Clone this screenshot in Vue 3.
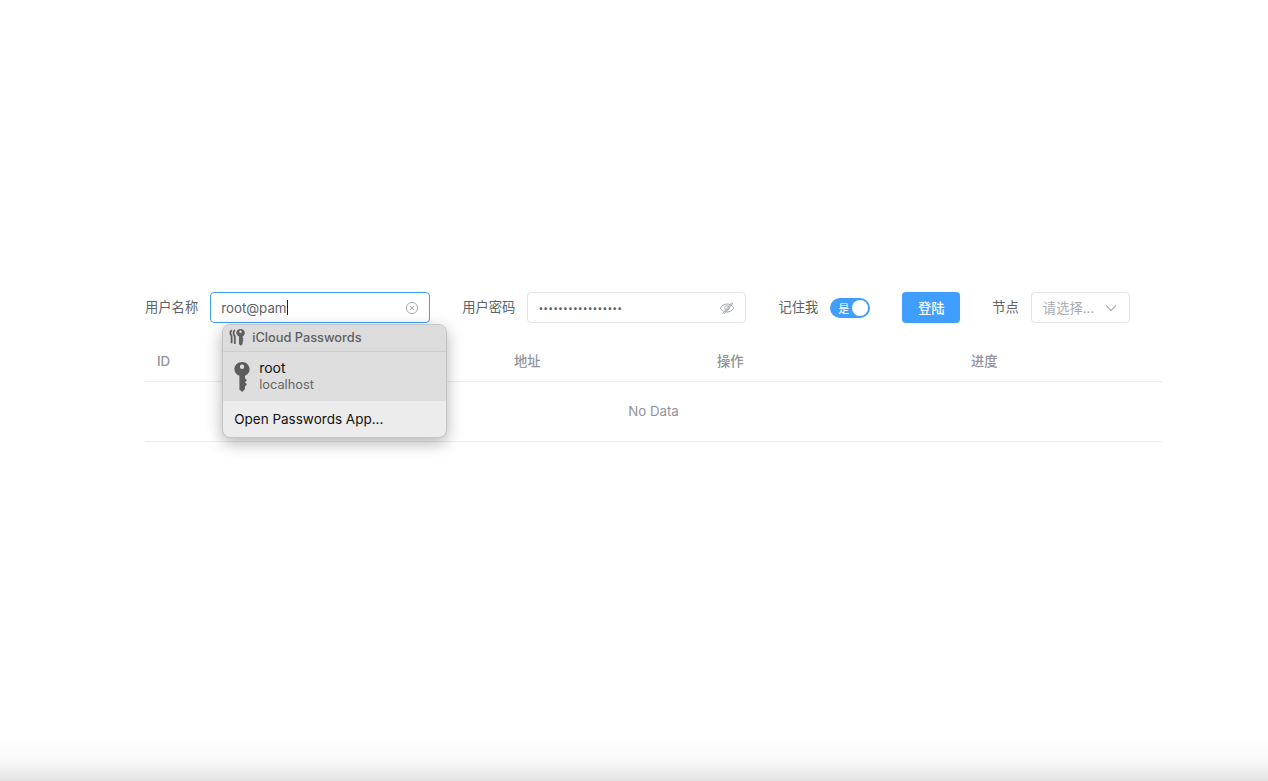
<script setup>
import { ref } from 'vue'

const username = ref('root@pam')
const passwordDots = '•'.repeat(17)
const columns = ['ID', '', '地址', '操作', '进度']
</script>

<template>
  <div class="page">
    <form class="login-form" @submit.prevent>
      <label class="form-label">用户名称</label>
      <div class="field field-user">
        <div class="input input-focus">
          <span class="input-text">{{ username }}<i class="caret"></i></span>
          <svg class="suffix" width="14" height="14" viewBox="0 0 14 14" fill="none" stroke="#a8abb2">
            <circle cx="7" cy="7" r="5.6" />
            <path d="M5 5l4 4M9 5l-4 4" />
          </svg>
        </div>

        <!-- browser password popup sits over the table -->
        <div class="popup">
          <div class="popup-head">
            <svg class="keys-icon" width="17" height="17" viewBox="0 0 17 17">
              <g fill="none" stroke="#5f5f5f" stroke-width="1.800">
                <path d="M2.800 1.200C.9 2.800.9 5.200 2.600 6.800v7.400" />
                <path d="M6 .9C4.100 2.500 4 5.400 5.800 7.100v8" />
              </g>
              <path fill="#5f5f5f" fill-rule="evenodd" d="M11.500 0c2.400 0 4.300 1.700 4.300 3.900 0 1.500-.9 2.800-2.200 3.500v1.300l1 1-1 1 1 1-1 1.100v2.300l-1.700 1.700-1.900-1.700V7.400C8.600 6.700 7.300 5.400 7.300 3.900 7.300 1.700 9.100 0 11.500 0zm0 1.600a1.200 1.200 0 100 2.400 1.200 1.200 0 000-2.400z" />
            </svg>
            <span>iCloud Passwords</span>
          </div>
          <div class="popup-item">
            <svg class="key-icon" width="16" height="30" viewBox="0 0 16 30" fill="#5c5c5c">
              <path fill-rule="evenodd" d="M8 0c4.300 0 7.600 3.200 7.600 7.200 0 3-1.900 5.500-4.600 6.600v2.400l2 2-2 2 2 2.100-2 2.100v2.500L8.200 30 5.400 27.400V13.800C2.500 12.700.4 10.200.4 7.200.4 3.200 3.700 0 8 0zm0 2.600a2.200 2.200 0 100 4.400 2.200 2.200 0 000-4.400z" />
            </svg>
            <div class="item-text">
              <span class="item-name">root</span>
              <span class="item-host">localhost</span>
            </div>
          </div>
          <div class="popup-open">Open Passwords App...</div>
        </div>
      </div>

      <label class="form-label label-gap">用户密码</label>
      <div class="input input-pass">
        <span class="input-dots">{{ passwordDots }}</span>
        <svg class="suffix" width="16" height="14" viewBox="0 0 16 14" fill="none" stroke="#a8abb2">
          <path d="M1.200 7C3 4.400 5.300 3 8 3s5 1.400 6.800 4C13 9.600 10.700 11 8 11S3 9.600 1.200 7z" />
          <circle cx="8" cy="7" r="2.300" />
          <path d="M3.500 12.800L12.800 1.500M5 13l9-11" />
        </svg>
      </div>

      <label class="form-label label-gap">记住我</label>
      <div class="switch">
        <span class="switch-text">是</span>
        <span class="switch-knob"></span>
      </div>

      <button class="login-btn" type="submit">登陆</button>

      <label class="form-label label-gap">节点</label>
      <div class="select">
        <span class="select-text">请选择...</span>
        <svg width="12" height="8" viewBox="0 0 12 8" fill="none" stroke="#a8abb2" stroke-width="1.100">
          <path d="M1 1.500l5 5 5-5" />
        </svg>
      </div>
    </form>

    <div class="table">
      <div class="table-head">
        <div v-for="(col, index) in columns" :key="index" class="th">{{ col }}</div>
      </div>
      <div class="table-empty">No Data</div>
    </div>
  </div>
</template>

<style scoped>
.page {
  height: 781px;
  box-sizing: border-box;
  padding: 292px 106px 0 145px;
  overflow: hidden;
  background: linear-gradient(to bottom, #fff 0, #fff 738px, #f8f8f8 762px, #e4e4e4 781px);
  font-family: Inter, "Noto Sans CJK SC", sans-serif;
  color: #606266;
}

.login-form {
  display: flex;
  align-items: center;
  height: 31px;
}

.form-label {
  font-size: 13.3px;
  line-height: 31px;
  white-space: nowrap;
  color: #606266;
}

.label-gap {
  margin-left: 32px;
}

.field-user {
  position: relative;
  margin-left: 12px;
}

.input {
  box-sizing: border-box;
  height: 31px;
  display: flex;
  align-items: center;
  justify-content: space-between;
  padding: 0 10px;
  background: #fff;
  border: 1px solid #e1e4ea;
  border-radius: 4px;
}

.input-focus {
  width: 220px;
  border-color: #409eff;
}

.input-text {
  font-size: 13.3px;
  color: #606266;
  display: flex;
  align-items: center;
}

.caret {
  display: block;
  width: 1px;
  height: 15px;
  background: #222;
}

.suffix {
  flex-shrink: 0;
}

.input-pass {
  width: 219px;
  margin-left: 12px;
}

.input-dots {
  font-size: 8.5px;
  letter-spacing: 0.15px;
  color: #606266;
}

.switch {
  box-sizing: border-box;
  width: 40px;
  height: 20px;
  margin-left: 12px;
  padding: 0 2px 0 8px;
  display: flex;
  align-items: center;
  justify-content: space-between;
  border-radius: 10px;
  background: #409eff;
}

.switch-text {
  font-size: 11px;
  color: #fff;
}

.switch-knob {
  width: 16px;
  height: 16px;
  border-radius: 50%;
  background: #fff;
}

.login-btn {
  box-sizing: border-box;
  width: 58px;
  height: 31px;
  margin-left: 32px;
  border: 0;
  border-radius: 4px;
  background: #409eff;
  color: #fff;
  font-family: inherit;
  font-size: 13.3px;
  font-weight: 500;
}

.select {
  box-sizing: border-box;
  width: 99px;
  height: 31px;
  margin-left: 12px;
  padding: 0 12px 0 11px;
  display: flex;
  align-items: center;
  justify-content: space-between;
  border: 1px solid #e1e4ea;
  border-radius: 4px;
}

.select-text {
  font-size: 13.3px;
  color: #a8abb2;
}

.popup {
  position: absolute;
  top: 32px;
  left: 12px;
  width: 225px;
  box-sizing: border-box;
  z-index: 5;
  overflow: hidden;
  border: 1px solid #c4c4c4;
  border-radius: 8px;
  background: #ececec;
  box-shadow: 0 5px 16px rgba(0, 0, 0, 0.3);
}

.popup-head {
  box-sizing: border-box;
  height: 27px;
  display: flex;
  align-items: center;
  padding: 0 0 1px 6px;
  background: #dcdcdc;
  border-bottom: 1px solid #cfcfcf;
  font-size: 12.8px;
  font-weight: 500;
  color: #5e5e5e;
}

.keys-icon {
  margin-right: 6px;
}

.popup-item {
  height: 49px;
  display: flex;
  align-items: center;
  padding-left: 11px;
  background: #dedede;
}

.key-icon {
  margin-right: 9px;
}

.item-text {
  display: flex;
  flex-direction: column;
  padding-bottom: 2px;
}

.item-name {
  font-size: 14px;
  line-height: 17px;
  color: #111;
}

.item-host {
  font-size: 12.8px;
  line-height: 17px;
  color: #666;
}

.popup-open {
  height: 36px;
  line-height: 36px;
  padding-left: 11px;
  font-size: 13.5px;
  color: #111;
}

.table {
  margin-top: 21px;
  width: 1017px;
  font-size: 13.3px;
}

.table-head {
  display: grid;
  grid-template-columns: 178px 179px 203px 254px 203px;
  height: 37px;
  border-bottom: 1px solid #ebeef5;
}

.th {
  padding-left: 12px;
  line-height: 35px;
  font-weight: 500;
  color: #909399;
}

.table-empty {
  height: 59px;
  line-height: 59px;
  text-align: center;
  color: #909399;
  border-bottom: 1px solid #ebeef5;
}
</style>

<style>
body {
  background: #fff;
}
</style>
